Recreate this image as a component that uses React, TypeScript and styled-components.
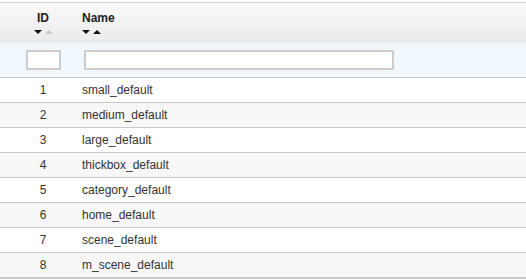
import styled, { createGlobalStyle } from "styled-components"

const Global = createGlobalStyle`
body{
    margin:0;
    background:#ffffff;
    font-family:"Liberation Sans", Arial, sans-serif;
}
`

const rows = [
    "small_default",
    "medium_default",
    "large_default",
    "thickbox_default",
    "category_default",
    "home_default",
    "scene_default",
    "m_scene_default",
]

const App = () => {
    return (
        <Page>
            <Global />
            <Table>
                <Head>
                    <IdHead>
                        <Title>ID</Title>
                        <Arrows>
                            <Down />
                            <Up $muted />
                        </Arrows>
                    </IdHead>
                    <NameHead>
                        <Title>Name</Title>
                        <Arrows>
                            <Down />
                            <Up />
                        </Arrows>
                    </NameHead>
                </Head>
                <Filter>
                    <IdCell>
                        <IdInput />
                    </IdCell>
                    <NameCell>
                        <NameInput />
                    </NameCell>
                </Filter>
                {rows.map((name, i) => (
                    <Row key={name} $alt={i % 2 === 1} $last={i === rows.length - 1}>
                        <IdCell>{i + 1}</IdCell>
                        <NameCell>{name}</NameCell>
                    </Row>
                ))}
            </Table>
        </Page>
    )
}
export default App

const Page = styled.div`
padding-top:2px;
width:526px;
`

const Table = styled.div`
border-top:1px solid #cfcfcf;
`

const Head = styled.div`
display:grid;
grid-template-columns:78px 1fr;
height:40px;
background:linear-gradient(#f9f9f9, #ebebeb);
`

const IdHead = styled.div`
display:flex;
flex-direction:column;
align-items:center;
padding:8px 0 0 8px;
`

const NameHead = styled.div`
display:flex;
flex-direction:column;
align-items:flex-start;
padding:8px 0 0 4px;
`

const Title = styled.div`
font-size:12px;
font-weight:bold;
color:#222;
line-height:14px;
`

const Arrows = styled.div`
display:flex;
gap:3px;
margin-top:5px;
`

const Down = styled.span`
width:0;
height:0;
border-left:4px solid transparent;
border-right:4px solid transparent;
border-top:4px solid #111;
`

const Up = styled.span<{ $muted?: boolean }>`
width:0;
height:0;
border-left:4px solid transparent;
border-right:4px solid transparent;
border-bottom:4px solid ${p => (p.$muted ? "#c8c8c8" : "#111")};
`

const Filter = styled.div`
display:grid;
grid-template-columns:78px 1fr;
height:34px;
align-items:center;
background:#f0f7fd;
border-bottom:1px solid #c8c8c8;
`

const IdCell = styled.div`
text-align:center;
padding-left:8px;
display:flex;
justify-content:center;
align-items:center;
`

const NameCell = styled.div`
padding-left:4px;
display:flex;
align-items:center;
`

const IdInput = styled.input`
box-sizing:border-box;
width:35px;
height:20px;
border:2px solid #cdcdcd;
background:#fff;
margin:0;
`

const NameInput = styled.input`
box-sizing:border-box;
width:310px;
height:20px;
margin:0 0 0 2px;
border:2px solid #cdcdcd;
background:#fff;
`

const Row = styled.div<{ $alt: boolean; $last: boolean }>`
display:grid;
grid-template-columns:78px 1fr;
height:24px;
align-items:center;
font-size:12px;
color:#333;
background:${p => (p.$alt ? "#f8f8f8" : "#ffffff")};
border-bottom:${p => (p.$last ? "2px solid #c8c8c8" : "1px solid #c8c8c8")};
`
